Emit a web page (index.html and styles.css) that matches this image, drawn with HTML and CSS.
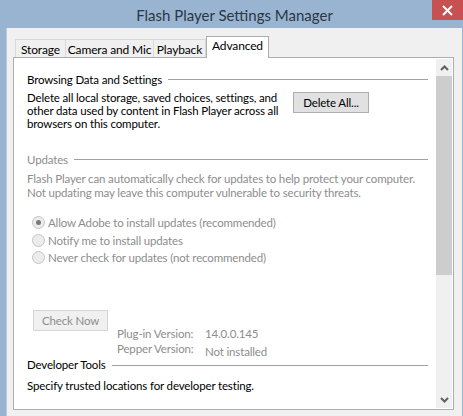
FILE: index.html
```html
<!DOCTYPE html>
<html>
<head>
<meta charset="utf-8">
<link rel="stylesheet" href="styles.css">
</head>
<body>
<div class="window">
  <div class="titlebar">
    <span class="title">Flash Player Settings Manager</span>
    <div class="close">
      <svg width="11" height="11" viewBox="0 0 11 11"><path d="M1 1L10 10M10 1L1 10" stroke="#fff" stroke-width="2"/></svg>
    </div>
  </div>
  <div class="client">
    <div class="tabs">
      <div class="tab t-storage">Storage</div>
      <div class="tab t-camera">Camera and Mic</div>
      <div class="tab t-playback">Playback</div>
      <div class="tab active">Advanced</div>
    </div>
    <div class="panel">
      <div class="content">
        <div class="group-head"><span>Browsing Data and Settings</span><div class="rule"></div></div>
        <div class="browse-row">
          <p class="desc">Delete all local storage, saved choices, settings, and<br>other data used by content in Flash Player across all<br>browsers on this computer.</p>
          <button class="btn">Delete All...</button>
        </div>
        <div class="group-head disabled updates-head"><span>Updates</span><div class="rule"></div></div>
        <p class="desc disabled upd-desc">Flash Player can automatically check for updates to help protect your computer.<br>Not updating may leave this computer vulnerable to security threats.</p>
        <div class="radios disabled">
          <div class="radio"><span class="dot checked"></span>Allow Adobe to install updates (recommended)</div>
          <div class="radio"><span class="dot"></span>Notify me to install updates</div>
          <div class="radio"><span class="dot"></span>Never check for updates (not recommended)</div>
        </div>
        <div class="version-row disabled">
          <button class="btn btn-disabled">Check Now</button>
          <div class="versions">
            <div class="vrow"><span class="vlabel">Plug-in Version:</span><span class="vval">14.0.0.145</span></div>
            <div class="vrow"><span class="vlabel">Pepper Version:</span><span class="vval pepper">Not installed</span></div>
          </div>
        </div>
        <div class="group-head dev-head"><span>Developer Tools</span><div class="rule"></div></div>
        <p class="desc dev-desc">Specify trusted locations for developer testing.</p>
      </div>
      <div class="scrollbar">
        <div class="arrow"><svg width="9" height="6" viewBox="0 0 9 6"><path d="M1 5L4.5 1.5L8 5" fill="none" stroke="#606060" stroke-width="2"/></svg></div>
        <div class="thumb"></div>
        <div class="track"></div>
        <div class="arrow"><svg width="9" height="6" viewBox="0 0 9 6"><path d="M1 1L4.5 4.5L8 1" fill="none" stroke="#606060" stroke-width="2"/></svg></div>
      </div>
    </div>
  </div>
</div>
</body>
</html>
```
FILE: styles.css
```css
html, body {
  margin: 0;
  padding: 0;
}
body {
  width: 463px;
  height: 416px;
  overflow: hidden;
  background: #99b4d1;
  font-family: Lato, "Noto Sans", sans-serif;
  font-size: 11.5px;
  letter-spacing: -0.15px;
  color: #000;
}
.window {
  display: flex;
  flex-direction: column;
  height: 416px;
}
.titlebar {
  height: 28px;
  position: relative;
  display: flex;
  justify-content: center;
  align-items: center;
}
.title {
  font-size: 15px;
  letter-spacing: 0;
  color: #2a3744;
  margin-left: 6px;
  margin-top: 1px;
}
.close {
  position: absolute;
  top: 0;
  right: 0;
  width: 31px;
  height: 20px;
  background: #c75050;
  display: flex;
  align-items: center;
  justify-content: center;
}
.client {
  flex: 1;
  margin-left: 6px;
  margin-right: 1px;
  border-left: 1px solid #b9cbe0;
  background: #f0f0f0;
  padding: 8px 8px 6px 6px;
  display: flex;
  flex-direction: column;
}
.tabs {
  display: flex;
  align-items: flex-end;
  height: 21px;
  padding-left: 2px;
  position: relative;
  z-index: 1;
}
.tab {
  height: 18px;
  box-sizing: border-box;
  border: 1px solid #d9d9d9;
  border-bottom: none;
  border-right: none;
  background: #f0f0f0;
  line-height: 19px;
  text-align: center;
  white-space: nowrap;
  font-size: 12px;
}
.t-storage { width: 50px; }
.t-camera { width: 88px; }
.t-playback { width: 53px; border-right: 1px solid #d9d9d9; }
.tab.active {
  width: 63px;
  height: 22px;
  margin-bottom: -1px;
  background: #fff;
  border: 1px solid #adadad;
  border-bottom: none;
  line-height: 17px;
}
.panel {
  flex: 1;
  border: 1px solid #adadad;
  background: #fff;
  display: flex;
  padding: 1px 1px 1px 0;
}
.content {
  flex: 1;
  padding: 12px 8px 0 13px;
}
.group-head {
  display: flex;
  align-items: center;
  height: 16px;
}
.group-head .rule {
  flex: 1;
  height: 1px;
  background: #a0a0a0;
  margin-left: 6px;
  margin-top: 1px;
}
.disabled {
  color: #8d8d8d;
}
.desc {
  margin: 0;
  line-height: 13px;
  white-space: nowrap;
}
.browse-row {
  display: flex;
  align-items: flex-start;
  margin-top: 4px;
}
.browse-row .desc {
  width: 258px;
}
.btn {
  font-family: inherit;
  font-size: 11.5px;
  letter-spacing: -0.15px;
  height: 21px;
  width: 76px;
  margin-left: 8px;
  margin-top: 1px;
  background: #e1e1e1;
  border: 1px solid #adadad;
  color: #000;
  padding: 0;
}
.updates-head {
  margin-top: 21px;
}
.upd-desc {
  margin-top: 5px;
  line-height: 14px;
}
.radios {
  margin-top: 14px;
  padding-left: 5px;
}
.radio {
  display: flex;
  align-items: center;
  height: 17.5px;
}
.dot {
  width: 11px;
  height: 11px;
  border-radius: 50%;
  border: 1px solid #c5c5c5;
  background: #ececec;
  margin-right: 3px;
  position: relative;
}
.dot.checked::after {
  content: "";
  position: absolute;
  left: 3px;
  top: 3px;
  width: 5px;
  height: 5px;
  border-radius: 50%;
  background: #7a7a7a;
}
.version-row {
  display: flex;
  margin-top: 43px;
}
.btn-disabled {
  margin-left: 6px;
  width: 75px;
  height: 21px;
  margin-top: 0;
  background: #f0f0f0;
  border-color: #d5d5d5;
  color: #8d8d8d;
}
.versions {
  margin-left: 9px;
  margin-top: 16px;
}
.vrow {
  display: flex;
  height: 15px;
  align-items: center;
  white-space: nowrap;
}
.vlabel {
  width: 75px;
  text-align: right;
}
.vval {
  margin-left: 13px;
}
.pepper {
  position: relative;
  top: 3px;
}
.dev-head {
  margin-top: 1px;
}
.dev-desc {
  margin-top: 6px;
}
.scrollbar {
  width: 16px;
  background: #f0f0f0;
  display: flex;
  flex-direction: column;
}
.arrow {
  height: 17px;
  display: flex;
  align-items: center;
  justify-content: center;
}
.thumb {
  height: 199px;
  background: #cdcdcd;
}
.track {
  flex: 1;
}
```
